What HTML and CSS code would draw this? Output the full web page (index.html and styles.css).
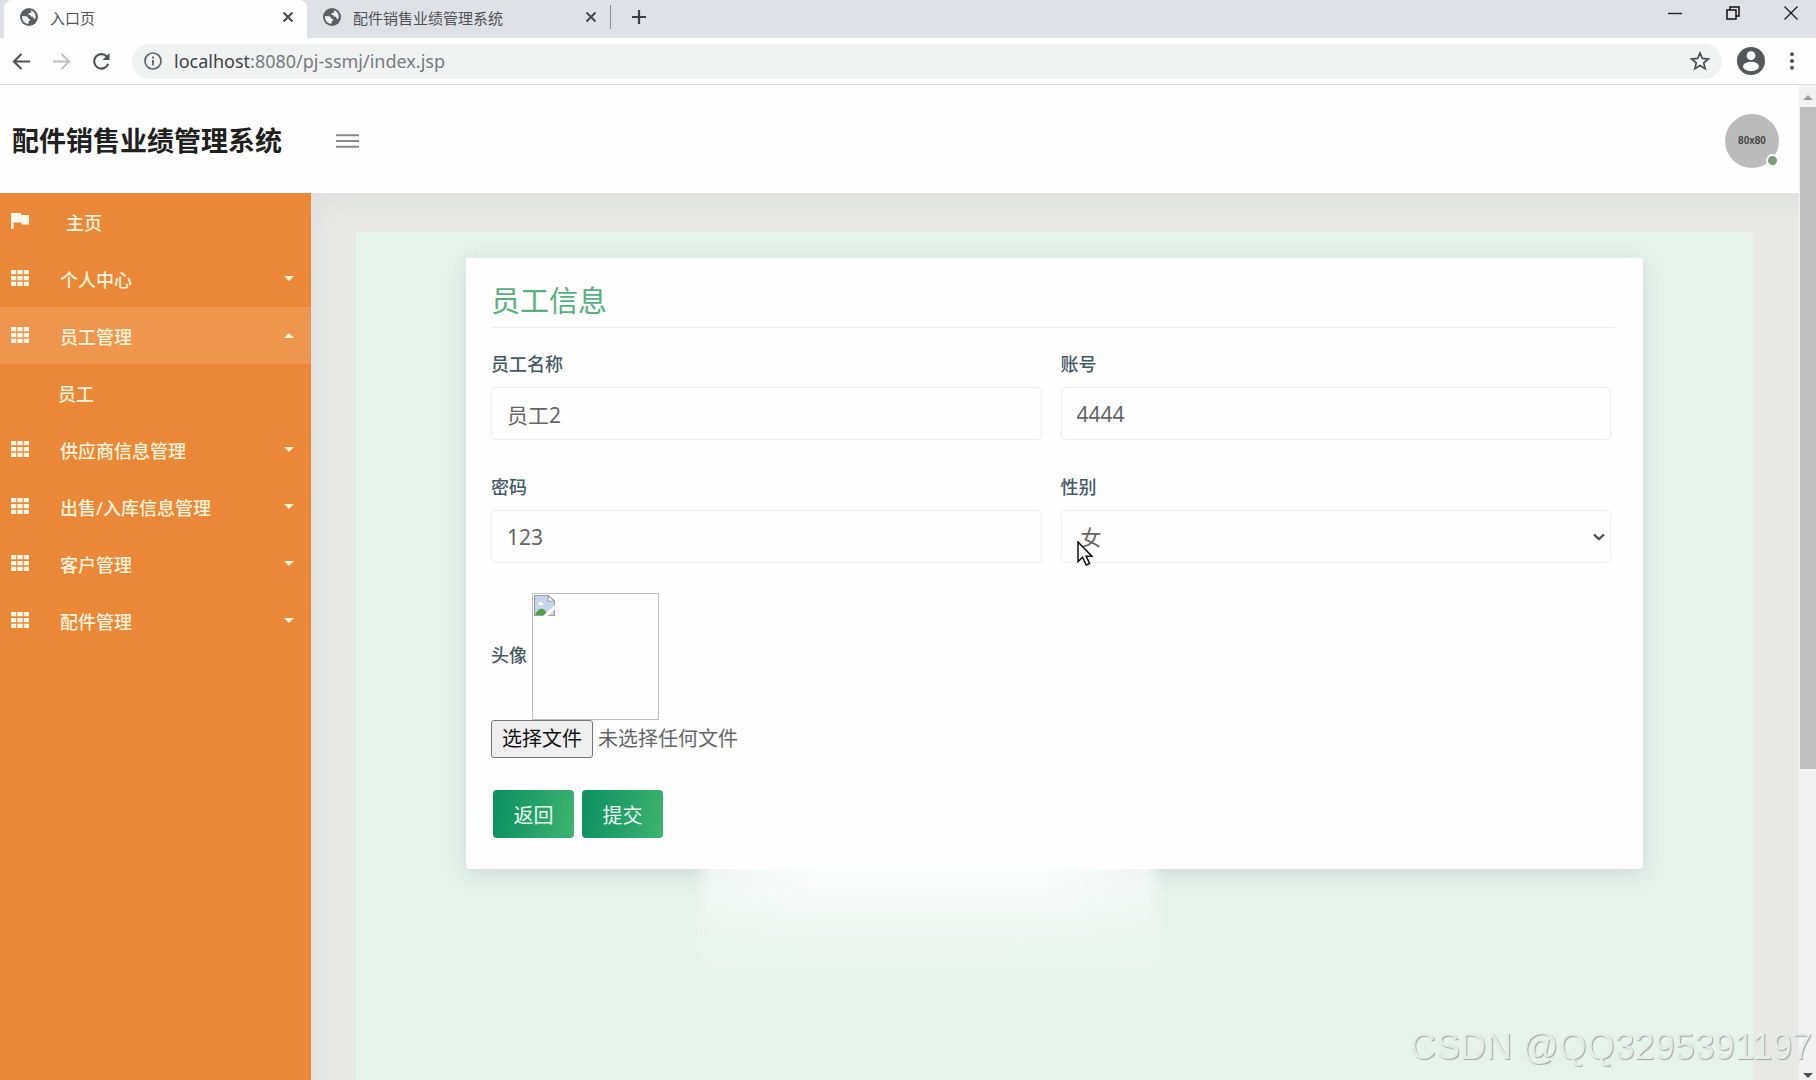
FILE: index.html
```html
<!DOCTYPE html>
<html lang="zh-CN">
<head>
<meta charset="utf-8">
<title>入口页</title>
<link rel="stylesheet" href="styles.css">
</head>
<body>
<svg class="sprite" aria-hidden="true">
  <symbol id="globe" viewBox="0 0 18 18">
    <circle cx="9" cy="9" r="9" fill="#5c6063"/>
    <path d="M2 8l3.600.2c1.800.2 2.600 1.100 2.600 2.500l1.700.3c.5 1.100-.4 2-1.100 2.300l-.4 2.800A7.200 7.200 0 0 1 2 8zM11 2.200l.2 2.200-2.600.8-.1 1.600 1.700.2.700 1.500 2 .2 1 2 1.200.2c.5-.9.700-1.700.6-2.700A7.200 7.200 0 0 0 11 2.200z" fill="#fff" opacity=".9"/>
  </symbol>
  <symbol id="cross" viewBox="0 0 12 12"><path d="M1.500 1.500l9 9M10.500 1.500l-9 9" stroke="#45484b" stroke-width="2" fill="none"/></symbol>
  <symbol id="grid" viewBox="0 0 18 16">
    <path d="M0 0h5.200v4.200H0zM6.400 0h5.200v4.200H6.400zM12.800 0H18v4.200h-5.200zM0 6h5.200v4.200H0zM6.400 6h5.200v4.200H6.400zM12.800 6H18v4.200h-5.200zM0 11.800h5.200V16H0zM6.400 11.800h5.200V16H6.400zM12.800 11.800H18V16h-5.200z" fill="#fff8e8"/>
  </symbol>
  <symbol id="caret" viewBox="0 0 10 5"><path d="M0 0h10L5 5z" fill="#fff3dc"/></symbol>
</svg>

<div class="tabs">
  <div class="tab tab-active">
    <svg class="favicon"><use href="#globe"/></svg>
    <span class="tab-name">入口页</span>
    <button class="tab-close" aria-label="关闭标签页"><svg><use href="#cross"/></svg></button>
  </div>
  <div class="tab">
    <svg class="favicon"><use href="#globe"/></svg>
    <span class="tab-name">配件销售业绩管理系统</span>
    <button class="tab-close" aria-label="关闭标签页"><svg><use href="#cross"/></svg></button>
  </div>
  <button class="tab-new" aria-label="新标签页"><svg viewBox="0 0 16 16"><path d="M8 1v14M1 8h14" stroke="#3c4043" stroke-width="2.200"/></svg></button>
  <div class="window-buttons">
    <button aria-label="最小化"><svg viewBox="0 0 14 14"><path d="M0 7.500h14" stroke="#222" stroke-width="1.400"/></svg></button>
    <button aria-label="还原"><svg viewBox="0 0 14 14"><path d="M1 4h9v9H1zM4 4V1h9v9h-3" fill="none" stroke="#111" stroke-width="1.500"/></svg></button>
    <button aria-label="关闭"><svg viewBox="0 0 14 14"><path d="M.5.500l13 13M13.500.500l-13 13" stroke="#222" stroke-width="1.400"/></svg></button>
  </div>
</div>

<div class="toolbar">
  <button class="nav-button" aria-label="后退"><svg viewBox="0 0 20 20"><path d="M19 10H2.500M10 2L2 10l8 8" fill="none" stroke="#505356" stroke-width="2.200"/></svg></button>
  <button class="nav-button" aria-label="前进"><svg viewBox="0 0 20 20"><path d="M1 10h16.500M10 2l8 8-8 8" fill="none" stroke="#bcbebf" stroke-width="2"/></svg></button>
  <button class="nav-button" aria-label="重新加载"><svg viewBox="0 0 20 20"><path d="M17 12.500A7.600 7.600 0 1 1 15.600 4.800" fill="none" stroke="#505356" stroke-width="2.300"/><path d="M18.500 1v7.500H11z" fill="#505356"/></svg></button>
  <div class="address">
    <svg class="info" viewBox="0 0 18 18"><circle cx="9" cy="9" r="8" fill="none" stroke="#5f6368" stroke-width="1.700"/><path d="M9 8v5.200M9 4.600v2" stroke="#5f6368" stroke-width="1.900"/></svg>
    <a class="url" href="#"><span class="host">localhost</span>:8080/pj-ssmj/index.jsp</a>
    <svg class="star" viewBox="0 0 18 18"><path d="M9 1.800l2.100 4.900 5.300.5-4 3.500 1.200 5.200L9 13.100l-4.600 2.800 1.200-5.200-4-3.500 5.300-.5z" fill="none" stroke="#505356" stroke-width="1.600"/></svg>
  </div>
  <svg class="profile" viewBox="0 0 28 28"><circle cx="14" cy="14" r="14" fill="#55585b"/><circle cx="14" cy="8.700" r="4.400" fill="#fff"/><ellipse cx="14" cy="19.500" rx="8" ry="4.700" fill="#fff"/></svg>
  <button class="more" aria-label="更多"><svg viewBox="0 0 4 18"><circle cx="2" cy="2.200" r="2"/><circle cx="2" cy="9" r="2"/><circle cx="2" cy="15.800" r="2"/></svg></button>
</div>

<div class="viewport">
  <div class="page">
    <header class="header">
      <h1 class="brand">配件销售业绩管理系统</h1>
      <button class="menu-toggle" aria-label="切换菜单"><svg viewBox="0 0 24 16"><path d="M0 2h24M0 8h24M0 14h24" stroke="#878988" stroke-width="2"/></svg></button>
      <div class="user">80x80<span class="online"></span></div>
    </header>
    <div class="body">
      <nav class="sidebar">
        <a class="item item-home" href="#"><svg class="item-icon" viewBox="0 0 18 16"><path d="M0 0h9.500l1 2H18v9.500h-7.200l-1-2H2.600V16H0z" fill="#fff8e8"/></svg><span>主页</span></a>
        <a class="item" href="#"><svg class="item-icon"><use href="#grid"/></svg><span>个人中心</span><svg class="caret"><use href="#caret"/></svg></a>
        <a class="item item-open" href="#"><svg class="item-icon"><use href="#grid"/></svg><span>员工管理</span><svg class="caret"><use href="#caret"/></svg></a>
        <a class="item item-sub" href="#"><span>员工</span></a>
        <a class="item" href="#"><svg class="item-icon"><use href="#grid"/></svg><span>供应商信息管理</span><svg class="caret"><use href="#caret"/></svg></a>
        <a class="item" href="#"><svg class="item-icon"><use href="#grid"/></svg><span>出售/入库信息管理</span><svg class="caret"><use href="#caret"/></svg></a>
        <a class="item" href="#"><svg class="item-icon"><use href="#grid"/></svg><span>客户管理</span><svg class="caret"><use href="#caret"/></svg></a>
        <a class="item" href="#"><svg class="item-icon"><use href="#grid"/></svg><span>配件管理</span><svg class="caret"><use href="#caret"/></svg></a>
      </nav>
      <main class="main">
        <div class="content">
          <form class="card">
            <h2 class="card-title">员工信息</h2>
            <div class="fields">
              <div class="field"><label for="name">员工名称</label><input id="name" type="text" value="员工2"></div>
              <div class="field"><label for="account">账号</label><input id="account" type="text" value="4444"></div>
              <div class="field"><label for="password">密码</label><input id="password" type="text" value="123"></div>
              <div class="field">
                <label for="gender">性别</label>
                <div class="select">
                  <select id="gender"><option>女</option><option>男</option></select>
                  <svg class="chevron" viewBox="0 0 12 8"><path d="M1 1.500l5 4.700 5-4.700" fill="none" stroke="#505356" stroke-width="2.400"/></svg>
                  <svg class="pointer" viewBox="0 0 16 25"><path d="M1 1v19.500l4.600-4.200 3.600 7.700 3.400-1.600-3.500-7.200h5.800z" fill="#fff" stroke="#111" stroke-width="1.500"/></svg>
                </div>
              </div>
            </div>
            <div class="photo">
              <label for="photo">头像</label>
              <div class="preview">
                <svg viewBox="0 0 20 20"><path d="M.5.500h13l6 5.500v13.500H.500z" fill="#c6d5ee" stroke="#9a9da3"/><path d="M13.500.500V6h6z" fill="#fff" stroke="#9a9da3"/><path d="M4 8.500c0-2 3-2.500 3.500-.8 1.500 0 1.800 1.800.5 2H4.500z" fill="#fff"/><path d="M1 19c2-5 6-7.500 9-5l3 5z" fill="#4da33f"/><path d="M8.500 20L20 9.500v4L13 20z" fill="#fff"/></svg>
              </div>
            </div>
            <div class="file">
              <input id="photo" type="file">
              <span class="file-button">选择文件</span>
              <span class="file-name">未选择任何文件</span>
            </div>
            <div class="actions">
              <button class="button" type="button">返回</button>
              <button class="button" type="submit">提交</button>
            </div>
          </form>
          <div class="glow"></div>
        </div>
      </main>
    </div>
  </div>
  <div class="scrollbar" aria-hidden="true">
    <svg class="arrow-up" viewBox="0 0 10 5"><path d="M0 5h10L5 0z" fill="#9c9d9c"/></svg>
    <div class="track"><div class="thumb"></div></div>
    <svg class="arrow-down" viewBox="0 0 10 5"><path d="M0 0h10L5 5z" fill="#4f504f"/></svg>
  </div>
</div>
<div class="watermark">CSDN @QQ3295391197</div>
</body>
</html>
```
FILE: styles.css
```css
* { box-sizing: border-box; }

body {
  margin: 0;
  height: 100vh;
  display: flex;
  flex-direction: column;
  overflow: hidden;
  background: #fdfefd;
  color: #666;
  font-family: "Noto Sans", "Noto Sans CJK SC", sans-serif;
  font-size: 20px;
}

svg { display: block; flex: none; }
a { color: inherit; text-decoration: none; }
button { border: 0; padding: 0; background: none; font: inherit; }
.sprite { position: absolute; width: 0; height: 0; }

/* Browser tabs */
.tabs {
  flex: none;
  display: flex;
  height: 38px;
  background: #dee1e5;
  padding-left: 4px;
}
.tab {
  display: flex;
  align-items: center;
  width: 303px;
  height: 34px;
  padding: 0 13px 0 16px;
  font-size: 15px;
  color: #505356;
}
.tab-active {
  height: 38px;
  padding-bottom: 4px;
  background: #fdfefd;
  border-radius: 8px 8px 0 0;
}
.favicon { width: 18px; height: 18px; margin-right: 12px; }
.tab-name { flex: 1; }
.tab-close svg { width: 12px; height: 12px; }
.tab-new {
  display: flex;
  align-items: center;
  align-self: flex-start;
  height: 24px;
  margin-top: 5px;
  padding-left: 20px;
  border-left: 1px solid #8f9295;
}
.tab-new svg { width: 16px; height: 16px; }
.window-buttons {
  display: flex;
  align-items: center;
  gap: 44px;
  height: 26px;
  margin-left: auto;
  padding-right: 18px;
}
.window-buttons svg { width: 14px; height: 14px; }

/* Address row */
.toolbar {
  flex: none;
  display: flex;
  align-items: center;
  height: 47px;
  padding: 0 22px 0 12px;
  border-bottom: 1px solid #dcdedd;
}
.nav-button { margin-right: 21px; }
.nav-button svg { width: 19px; height: 19px; }
.address {
  flex: 1;
  display: flex;
  align-items: center;
  height: 35px;
  margin-right: 15px;
  padding: 0 12px;
  border-radius: 18px;
  background: #f1f3f3;
}
.info { width: 18px; height: 18px; margin-right: 12px; }
.url { flex: 1; font-size: 18px; color: #777b7d; }
.host { color: #3f4245; }
.star { width: 20px; height: 20px; }
.profile { width: 28px; height: 28px; margin-right: 25px; }
.more svg { width: 4px; height: 18px; fill: #55585b; }

/* Application */
.viewport { flex: 1; display: flex; min-height: 0; }
.page { flex: 1; display: flex; flex-direction: column; min-width: 0; }
.header {
  flex: none;
  display: flex;
  align-items: center;
  height: 108px;
  padding: 3px 20px 0 12px;
}
.brand { margin: 0; width: 324px; font-size: 27px; line-height: 40px; color: #1f2120; }
.menu-toggle svg { width: 23px; height: 16px; }
.user {
  position: relative;
  display: flex;
  align-items: center;
  justify-content: center;
  width: 54px;
  height: 54px;
  margin-left: auto;
  border-radius: 50%;
  background: #babbba;
  color: #444;
  font: bold 10px "Liberation Sans", sans-serif;
}
.online {
  position: absolute;
  right: 0;
  bottom: 1px;
  width: 13px;
  height: 13px;
  border: 2px solid #fdfefd;
  border-radius: 50%;
  background: #7b9e78;
}

.body { flex: 1; display: flex; min-height: 0; }
.sidebar { width: 311px; background: #eb8837; color: #fff3dc; font-size: 18px; font-weight: 500; }
.item {
  display: flex;
  align-items: center;
  height: 57px;
  padding: 0 17px 0 11px;
}
.item span { flex: 1; padding-top: 2px; line-height: 26px; }
.item-icon { width: 18px; height: 16px; margin: 0 31px 2px 0; }
.item-home .item-icon { margin-right: 37px; }
.item-open { background: #ee954e; }
.item-sub { padding-left: 58px; }
.caret { width: 10px; height: 5px; }
.item-open .caret { transform: rotate(180deg); }

.main {
  flex: 1;
  display: flex;
  min-width: 0;
  padding: 39px 46px 0 45px;
  background: #e7e8e6;
  box-shadow: inset 16px 20px 20px -8px #dfe1df;
}
.content { flex: 1; background: #e6f3ec; padding: 26px 110px 0; }
.card {
  padding: 23px 28px 31px 25px;
  border-radius: 3px;
  background: #fdfefd;
  box-shadow: 0 5px 20px rgba(120, 140, 160, 0.24);
}
.card-title {
  margin: 0 0 22px;
  padding-bottom: 6px;
  border-bottom: 1px solid #edf0ee;
  font-size: 29px;
  font-weight: 400;
  line-height: 40px;
  color: #55b17d;
}
.fields {
  display: grid;
  grid-template-columns: 1fr 1fr;
  gap: 33px 19px;
  margin-right: 4px;
}
.field label, .photo label {
  display: block;
  font-size: 18px;
  font-weight: 500;
  line-height: 28px;
  color: #455a64;
}
.field label { margin-bottom: 9px; }
.field input, .field select {
  display: block;
  width: 100%;
  height: 53px;
  padding: 0 15px;
  border: 1px solid #eef1ef;
  border-radius: 4px;
  background: #fdfefd;
  color: #666;
  font: inherit;
  font-size: 21px;
}
.select { position: relative; }
.field select { appearance: none; padding-left: 19px; }
.chevron { position: absolute; right: 6px; top: 23px; width: 12px; height: 8px; }
.pointer { position: absolute; left: 16px; top: 31px; width: 16px; height: 25px; }

.photo { display: flex; align-items: center; gap: 5px; margin-top: 30px; }
.photo label { padding-bottom: 4px; }
.preview { width: 127px; height: 127px; padding: 1px; border: 1px solid #c0c2c0; }
.preview svg { width: 21px; height: 21px; }
.file { position: relative; display: flex; gap: 5px; width: max-content; line-height: 36px; }
.file input { position: absolute; inset: 0; width: 100%; opacity: 0; }
.file-button {
  height: 38px;
  padding: 0 10px;
  border: 1px solid #777;
  border-radius: 3px;
  background: #efefef;
  color: #111;
}
.file-name { padding-top: 1px; }
.actions { display: flex; gap: 8px; margin: 32px 0 0 2px; }
.button {
  width: 81px;
  height: 48px;
  border-radius: 4px;
  background: linear-gradient(100deg, #0b8e61, #3db470);
  color: #eafaf0;
}
/* Soft light under the card, on top of its shadow */
.glow {
  position: relative;
  width: 474px;
  height: 110px;
  margin-left: 226px;
  background: linear-gradient(#fbfdfc, rgba(230, 243, 236, 0));
  mask-image: linear-gradient(90deg, transparent, rgba(0, 0, 0, 0.7) 4%, #000 25%, #000 75%, rgba(0, 0, 0, 0.7) 96%, transparent);
}

.scrollbar {
  display: flex;
  flex-direction: column;
  align-items: center;
  width: 17px;
  padding: 10px 0 2px 1px;
  background: #f1f2f1;
}
.arrow-up, .arrow-down { width: 10px; height: 5px; }
.track { flex: 1; width: 100%; padding: 7px 0; }
.thumb { height: 69%; background: #bebfbe; }

.watermark {
  position: fixed;
  right: 4px;
  bottom: 13px;
  font: 36px/40px "Liberation Sans", sans-serif;
  color: rgba(232, 238, 234, 0.95);
  text-shadow: 1px 1px 1px #a3a8a5;
}
```
